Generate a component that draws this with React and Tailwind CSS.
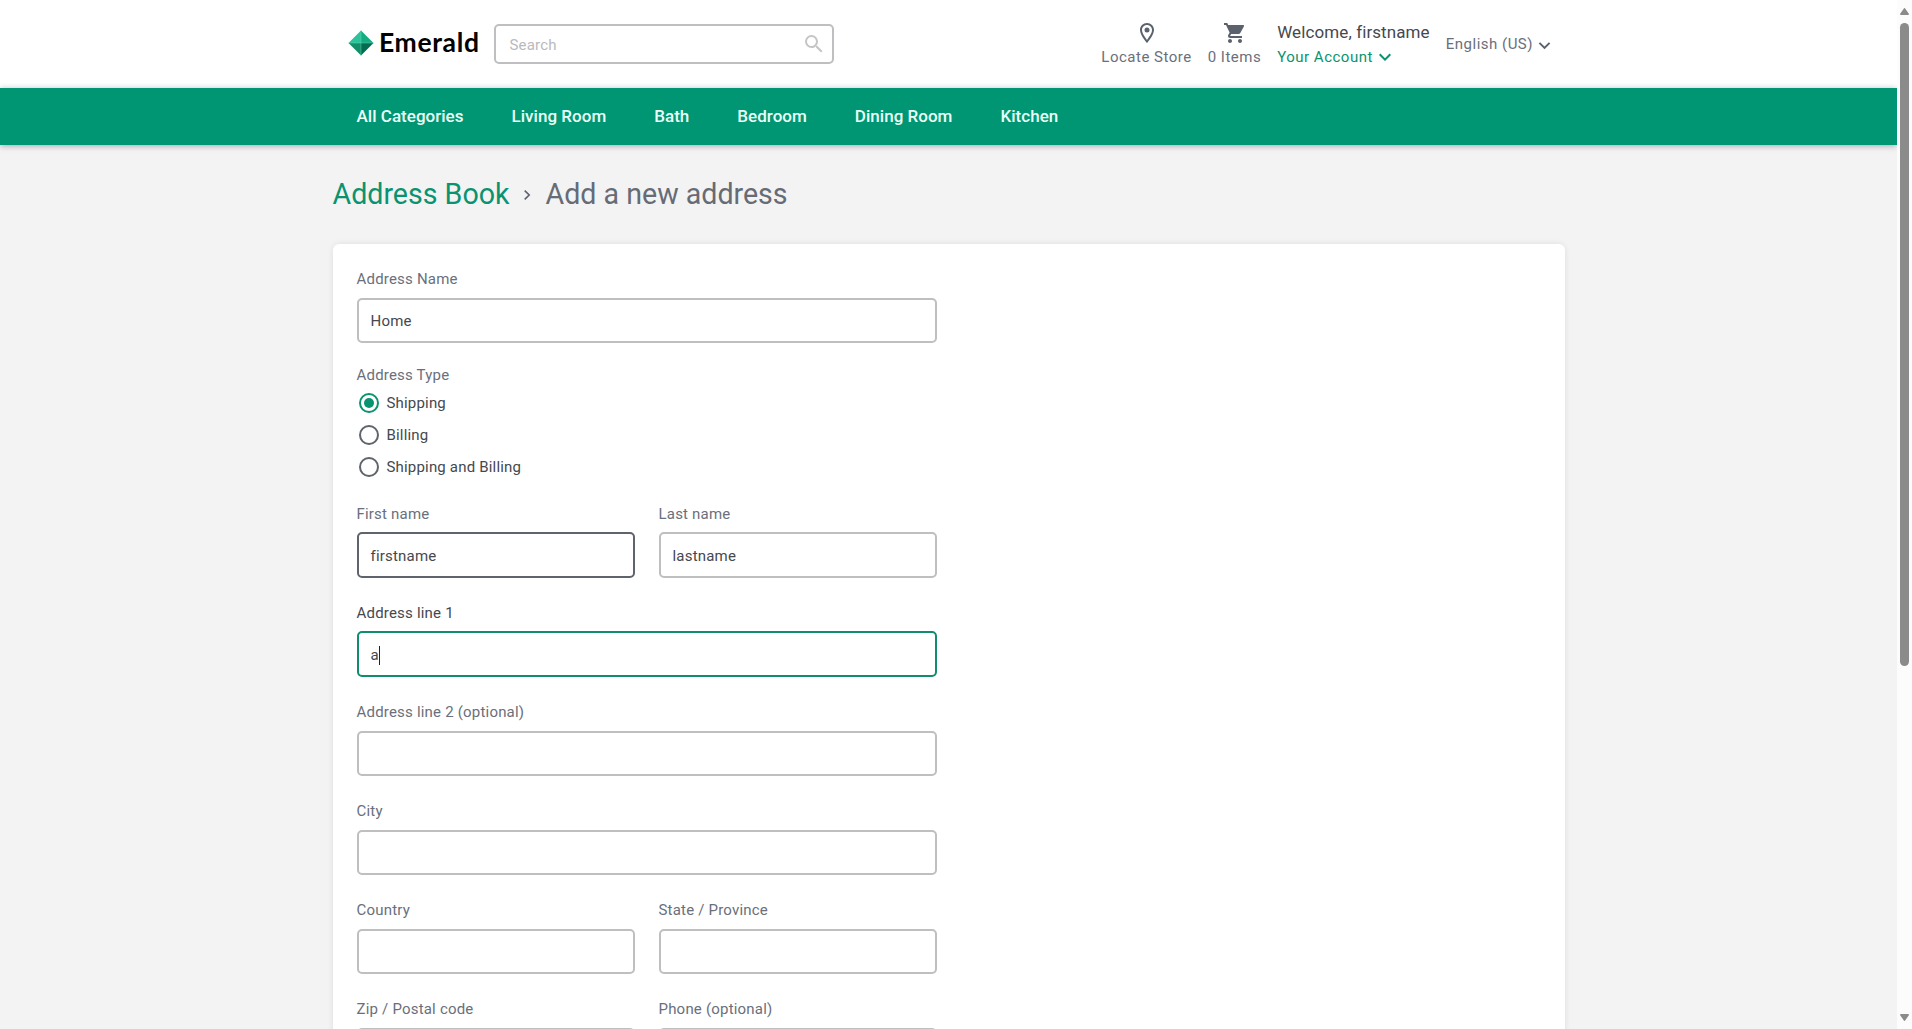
const NAV = ["All Categories", "Living Room", "Bath", "Bedroom", "Dining Room", "Kitchen"];

function Chevron({ className }) {
  return (
    <svg viewBox="0 0 24 24" className={className} fill="currentColor" aria-hidden="true">
      <path d="M16.59 8.59L12 13.17 7.41 8.59 6 10l6 6 6-6z" />
    </svg>
  );
}

function Logo() {
  return (
    <div className="flex items-center">
      <svg viewBox="0 0 26 26" className="h-[26px] w-[26px]" aria-hidden="true">
        <path d="M13 .5L.5 13H13z" fill="#2cc39a" />
        <path d="M13 .5L25.5 13H13z" fill="#17ab82" />
        <path d="M.5 13L13 25.5V13z" fill="#139069" />
        <path d="M25.5 13L13 25.5V13z" fill="#066b50" />
        <path d="M.5 13h25M13 .5v25" stroke="#5fd3b3" strokeWidth=".5" />
      </svg>
      <span className="-mt-px ml-[5px] font-['Lato',sans-serif] text-[26.5px] leading-8 font-bold tracking-[0.65px] text-black">
        Emerald
      </span>
    </div>
  );
}

function Header() {
  return (
    <header className="h-[88px] bg-white">
      <div className="mx-auto flex h-full w-[1232px] items-start pl-[15.5px]">
        <div className="w-[145.5px] pt-[27px]">
          <Logo />
        </div>
        <div className="mt-6 mr-auto flex h-10 w-[340px] items-center justify-between rounded-[5px] border-2 border-[#bfbfc1] pr-[6px] pl-[14px] text-[#b9babd]">
          <span className="mt-[2px]">Search</span>
          <svg viewBox="0 0 24 24" className="h-6 w-6" fill="#c4c5c7" aria-hidden="true">
            <path d="M15.5 14h-.79l-.28-.27A6.471 6.471 0 0 0 16 9.5 6.5 6.5 0 1 0 9.5 16c1.61 0 3.09-.59 4.23-1.57l.27.28v.79l5 4.99L20.49 19l-4.99-5zm-6 0C7.01 14 5 11.99 5 9.5S7.01 5 9.5 5 14 7.01 14 9.5 11.99 14 9.5 14z" />
          </svg>
        </div>
        <div className="flex gap-4 pr-[8.5px] tracking-[0.5px] text-[#6a6f7b]">
          <div className="flex flex-col items-center pt-[21px]">
            <svg viewBox="0 0 24 24" className="ml-[1px] h-6 w-6" fill="#5b626d" aria-hidden="true">
              <path d="M12 2C8.13 2 5 5.13 5 9c0 5.25 7 13 7 13s7-7.75 7-13c0-3.87-3.13-7-7-7zM7 9c0-2.76 2.24-5 5-5s5 2.24 5 5c0 2.88-2.88 7.19-5 9.88C9.92 16.21 7 11.85 7 9z" />
              <circle cx="12" cy="9" r="2.5" />
            </svg>
            <span className="mt-[2px]">Locate Store</span>
          </div>
          <div className="flex flex-col items-center pt-[21px]">
            <svg viewBox="0 0 24 24" className="ml-[1px] h-6 w-6" fill="#5b626d" aria-hidden="true">
              <path d="M7 18c-1.1 0-1.99.9-1.99 2S5.9 22 7 22s2-.9 2-2-.9-2-2-2zM1 2v2h2l3.6 7.59-1.35 2.45c-.16.28-.25.61-.25.96 0 1.1.9 2 2 2h12v-2H7.42c-.14 0-.25-.11-.25-.25l.03-.12.9-1.63h7.45c.75 0 1.41-.41 1.75-1.03l3.58-6.49A1.003 1.003 0 0 0 20 4H5.21l-.94-2H1zm16 16c-1.1 0-1.99.9-1.99 2s.89 2 1.99 2 2-.9 2-2-.9-2-2-2z" />
            </svg>
            <span className="mt-[2px]">0 Items</span>
          </div>
          <div className="pt-[22px]">
            <div className="text-[17px] tracking-[0.1px] text-[#45484e]">Welcome, firstname</div>
            <div className="mt-[5px] flex items-center text-[#0a9370]">
              <span>Your Account</span>
              <Chevron className="-my-2 h-6 w-6" />
            </div>
          </div>
          <div className="flex items-start self-start pt-[34px]">
            <span>English (US)</span>
            <Chevron className="h-[23px] w-[23px] text-[#5b626d]" />
          </div>
        </div>
      </div>
    </header>
  );
}

function Field({ label, value, state, caret }) {
  const border =
    state === "focus" ? "border-[#0f8d6d]" : state === "hover" ? "border-[#5f636c]" : "border-[#bfbfc1]";
  return (
    <div className="flex-1">
      <div className={state === "focus" ? "text-[#45484e]" : "text-[#6a6f7b]"}>{label}</div>
      <div className={`mt-[8.4px] flex h-[45.35px] items-center rounded-[5px] border-2 pt-[2px] pl-[12px] text-[#45484e] ${border}`}>
        <span>{value}</span>
        {caret && <span className="h-[19px] w-px bg-[#222]" />}
      </div>
    </div>
  );
}

function Radio({ label, checked }) {
  return (
    <div className="flex h-8 items-center pl-[2px] text-[#45484e]">
      <span
        className={`flex h-5 w-5 items-center justify-center rounded-full border-2 ${checked ? "border-[#0a9370]" : "border-[#5f636c]"}`}
      >
        {checked && <span className="h-[10px] w-[10px] rounded-full bg-[#0a9370]" />}
      </span>
      <span className="ml-2 tracking-[0.18px]">{label}</span>
    </div>
  );
}

function Scrollbar() {
  return (
    <div className="flex w-[15px] shrink-0 flex-col items-center bg-[#fcfcfc] pt-2 pb-2">
      <svg viewBox="0 0 9 7" className="h-[7px] w-[9px]" fill="#8b8b8b" aria-hidden="true">
        <path d="M4.5 0Q5 0 5.5 1L9 6Q9 7 8 7H1Q0 7 0 6L3.5 1Q4 0 4.5 0z" />
      </svg>
      <div className="mt-2 h-[643px] w-[9px] rounded-full bg-[#8b8b8b]" />
      <svg viewBox="0 0 9 7" className="mt-auto h-[7px] w-[9px]" fill="#8b8b8b" aria-hidden="true">
        <path d="M4.5 7Q4 7 3.5 6L0 1Q0 0 1 0H8Q9 0 9 1L5.5 6Q5 7 4.5 7z" />
      </svg>
    </div>
  );
}

export default function App() {
  return (
    <div className="flex h-[1029px] w-[1912px] overflow-hidden bg-[#f3f3f3] font-['Roboto',sans-serif] text-[15px] leading-5 tracking-[0.2px]">
      <div className="h-full min-w-0 flex-1 overflow-hidden">
        <Header />
        <nav className="h-[57px] bg-[#009673] shadow-[0_1px_6px_rgba(20,20,80,0.35)]">
          <div className="mx-auto flex h-full w-[1232px] items-center gap-12 pb-[2px] pl-6 text-[17px] font-medium tracking-[0.025px] text-[#e9fff8]">
            {NAV.map((item) => (
              <span key={item}>{item}</span>
            ))}
          </div>
        </nav>
        <main className="mx-auto w-[1232px]">
          <div className="flex h-[99px] items-center pb-[2px] text-[28.6px] leading-9 tracking-normal text-[#666b76]">
            <span className="text-[#0a9370]">Address Book</span>
            <svg viewBox="0 0 8 12" className="mt-[3px] mr-[15px] ml-[13px] h-3 w-2" fill="none" stroke="#5b626d" strokeWidth="1.6" aria-hidden="true">
              <path d="M1.7 1.6L6.2 6L1.7 10.4" />
            </svg>
            <span>Add a new address</span>
          </div>
          <section className="h-[1000px] rounded-md bg-white pt-[25px] pl-6 shadow-[0_0_6px_rgba(0,0,0,0.09)]">
            <div className="w-[580px]">
              <div className="text-[#6a6f7b]">Address Name</div>
              <div className="mt-[9px] flex h-[45px] items-center rounded-[5px] border-2 border-[#bfbfc1] pl-[12px] text-[#45484e]">
                Home
              </div>
              <div className="mt-[22px] text-[#6a6f7b]">Address Type</div>
              <div className="mt-[2px]">
                <Radio label="Shipping" checked />
                <Radio label="Billing" />
                <Radio label="Shipping and Billing" />
              </div>
              <div className="mt-[20.98px] flex flex-col gap-[25.35px]">
                <div className="flex gap-6">
                  <Field label="First name" value="firstname" state="hover" />
                  <Field label="Last name" value="lastname" />
                </div>
                <Field label="Address line 1" value="a" state="focus" caret />
                <Field label="Address line 2 (optional)" />
                <Field label="City" />
                <div className="flex gap-6">
                  <Field label="Country" />
                  <Field label="State / Province" />
                </div>
                <div className="flex gap-6">
                  <Field label="Zip / Postal code" />
                  <Field label="Phone (optional)" />
                </div>
              </div>
            </div>
          </section>
        </main>
      </div>
      <Scrollbar />
    </div>
  );
}
